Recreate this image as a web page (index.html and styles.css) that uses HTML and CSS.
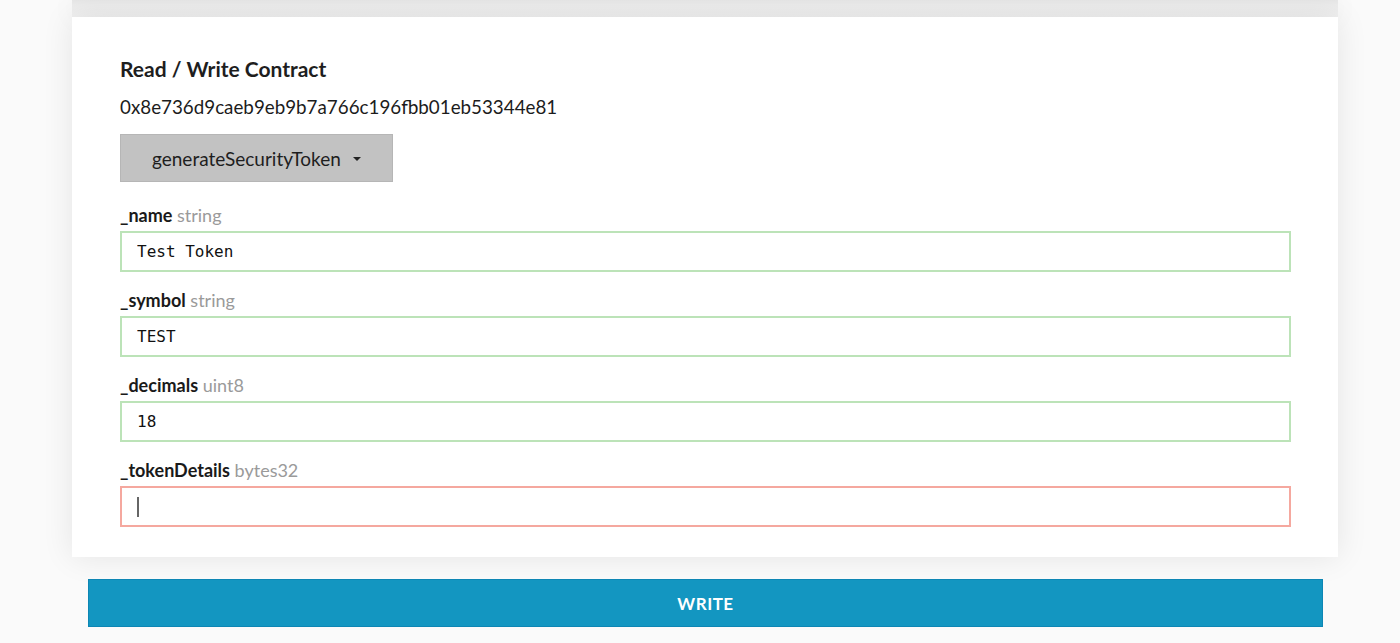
FILE: index.html
```html
<!DOCTYPE html>
<html lang="en">
<head>
    <meta charset="UTF-8">
    <meta name="viewport" content="width=device-width, initial-scale=1.0">
    <title>Read / Write Contract</title>
    <link rel="stylesheet" href="styles.css">
</head>
<body>
    <div class="page">
        <div class="prev-card"></div>

        <div class="card">
            <h2 class="title">Read / Write Contract</h2>
            <p class="address">0x8e736d9caeb9eb9b7a766c196fbb01eb53344e81</p>

            <button class="method-select">
                generateSecurityToken
                <span class="caret"></span>
            </button>

            <div class="fields">
                <div class="field">
                    <label for="f-name"><b>_name</b> <span class="type">string</span></label>
                    <input id="f-name" class="valid" type="text" value="Test Token">
                </div>
                <div class="field">
                    <label for="f-symbol"><b>_symbol</b> <span class="type">string</span></label>
                    <input id="f-symbol" class="valid" type="text" value="TEST">
                </div>
                <div class="field">
                    <label for="f-decimals"><b>_decimals</b> <span class="type">uint8</span></label>
                    <input id="f-decimals" class="valid" type="text" value="18">
                </div>
                <div class="field">
                    <label for="f-details"><b>_tokenDetails</b> <span class="type">bytes32</span></label>
                    <div class="input invalid"><span class="cursor"></span></div>
                </div>
            </div>
        </div>

        <button class="write-btn">WRITE</button>
    </div>
</body>
</html>
```

FILE: styles.css
```css
body {
    margin: 0;
    background-color: #fafafa;
    font-family: Lato, "Open Sans", sans-serif;
    color: #1c1c1c;
}

.page {
    display: flex;
    flex-direction: column;
    align-items: flex-start;
}

.prev-card {
    margin-left: 72px;
    width: 1266px;
    height: 17px;
    background: linear-gradient(#e6e6e6, #ececec 30%, #f0f0f0);
    box-shadow: 0 0 30px rgba(0, 0, 0, 0.05);
}

.card {
    margin-left: 72px;
    width: 1266px;
    height: 540px;
    box-sizing: border-box;
    padding: 39px 47px 0 48px;
    background-color: #fff;
    box-shadow: 0 0 30px rgba(0, 0, 0, 0.09);
}

.title {
    margin: 0;
    font-size: 21px;
    line-height: 25px;
    font-weight: 700;
    color: #1e1e1e;
}

.address {
    margin: 14px 0 15px 0;
    font-size: 18.8px;
    line-height: 24px;
}

.method-select {
    display: flex;
    align-items: center;
    width: 273px;
    height: 48px;
    padding: 0 0 0 31px;
    background-color: #c2c2c2;
    border: 1px solid #b6b6b6;
    font-family: Lato, "Open Sans", sans-serif;
    font-size: 19px;
    color: #1e1e1e;
    cursor: pointer;
}

.caret {
    margin-left: 12px;
    margin-top: 2px;
    width: 0;
    height: 0;
    border-left: 4px solid transparent;
    border-right: 4px solid transparent;
    border-top: 4px solid #222;
}

.fields {
    display: flex;
    flex-direction: column;
    gap: 16px;
    margin-top: 21px;
}

.field {
    display: flex;
    flex-direction: column;
    gap: 4px;
}

.field label {
    font-size: 18px;
    line-height: 24px;
}

.field label b {
    font-weight: 700;
    color: #1a1a1a;
}

.type {
    color: #9a9a9a;
    font-weight: 400;
}

.field input,
.input {
    height: 41px;
    width: 100%;
    box-sizing: border-box;
    padding: 0 15px;
    border: 2px solid #bce3b8;
    background: #fff;
    font-family: "DejaVu Sans Mono", "Liberation Mono", monospace;
    font-size: 16px;
    color: #111;
    outline: none;
}

.input {
    display: flex;
    align-items: center;
}

.input.invalid {
    border-color: #f5a89f;
}

.cursor {
    display: block;
    width: 2px;
    height: 20px;
    background-color: #666;
}

.write-btn {
    margin: 22px 0 0 88px;
    width: 1235px;
    height: 48px;
    background-color: #1396c1;
    border: 1px solid #0d86b4;
    color: #fff;
    font-family: Lato, "Open Sans", sans-serif;
    font-size: 17px;
    font-weight: 700;
    letter-spacing: 0.5px;
    cursor: pointer;
}
```
